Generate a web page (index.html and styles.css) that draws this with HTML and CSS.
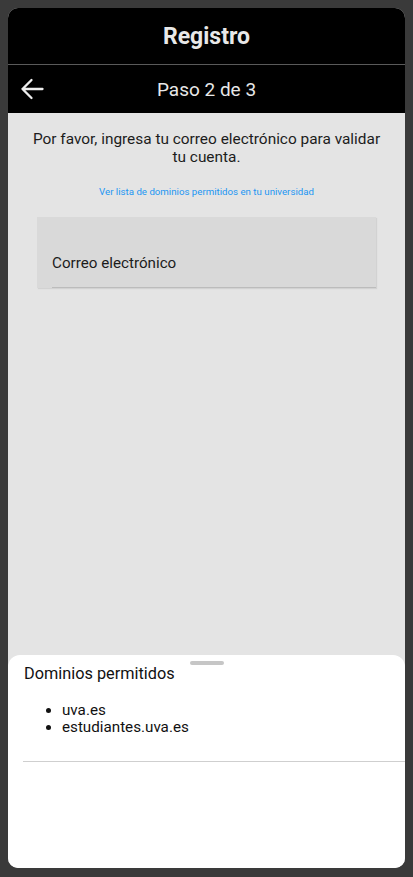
FILE: index.html
```html
<!DOCTYPE html>
<html lang="es">
<head>
  <meta charset="UTF-8">
  <meta name="viewport" content="width=device-width, initial-scale=1.0">
  <title>Registro</title>
  <link rel="stylesheet" href="styles.css">
</head>
<body>
  <div class="device">
    <!-- Cabecera -->
    <header class="title-bar">
      <h1>Registro</h1>
    </header>
    <nav class="step-bar">
      <button class="back-btn" aria-label="Volver">
        <svg width="24" height="22" viewBox="0 0 24 22">
          <path d="M2.5 11H22.5M11.5 2L2.5 11L11.5 20" fill="none" stroke="#eeeeee" stroke-width="2.3" stroke-linecap="round" stroke-linejoin="round"/>
        </svg>
      </button>
      <span class="step-label">Paso 2 de 3</span>
    </nav>

    <!-- Contenido -->
    <main class="content">
      <p class="intro">Por favor, ingresa tu correo electrónico para validar tu cuenta.</p>
      <a href="#" class="domain-link">Ver lista de dominios permitidos en tu universidad</a>
      <label class="field">
        <span class="field-label">Correo electrónico</span>
      </label>
    </main>

    <!-- Hoja inferior -->
    <section class="sheet">
      <div class="sheet-handle"></div>
      <h2 class="sheet-title">Dominios permitidos</h2>
      <ul class="domain-list">
        <li>uva.es</li>
        <li>estudiantes.uva.es</li>
      </ul>
      <hr class="sheet-divider">
    </section>
  </div>
</body>
</html>
```

FILE: styles.css
```css
body {
  margin: 0;
  padding: 8px;
  background-color: #3a3a3a;
  font-family: Roboto, "Noto Sans", sans-serif;
}
.device {
  width: 397px;
  height: 860px;
  border-radius: 10px;
  overflow: hidden;
  background-color: #e4e4e4;
  display: flex;
  flex-direction: column;
}
.title-bar {
  height: 56px;
  background-color: #000;
  border-bottom: 1px solid #5a5a5a;
  display: flex;
  align-items: center;
  justify-content: center;
}
.title-bar h1 {
  margin: 0;
  font-size: 23px;
  font-weight: bold;
  color: #e8e8e8;
}
.step-bar {
  height: 48px;
  background-color: #000;
  display: flex;
  align-items: center;
  justify-content: center;
  position: relative;
}
.back-btn {
  position: absolute;
  left: 12px;
  top: 13px;
  background: none;
  border: none;
  padding: 0;
  cursor: pointer;
  display: flex;
}
.step-label {
  font-size: 19px;
  color: #e8e8e8;
}
.content {
  flex: 1;
  padding: 17px 22px 0;
  display: flex;
  flex-direction: column;
  align-items: center;
}
.intro {
  margin: 0;
  font-size: 15.4px;
  line-height: 18px;
  color: #1c1c1c;
  text-align: center;
}
.domain-link {
  margin-top: 20px;
  font-size: 9.7px;
  line-height: 12px;
  color: #2196f3;
  text-decoration: none;
}
.field {
  margin-top: 19px;
  width: 339px;
  height: 71px;
  background-color: #d9d9d9;
  box-shadow: 1px 1px 1px #d2d2d2;
  padding-left: 15px;
  box-sizing: border-box;
  display: flex;
  align-items: flex-end;
}
.field-label {
  flex: 1;
  font-size: 15.2px;
  line-height: 18px;
  color: #1c1c1c;
  padding-bottom: 15px;
  border-bottom: 1px solid #bcbcbc;
}
.sheet {
  height: 213px;
  background-color: #fff;
  border-radius: 12px 12px 0 0;
  padding-left: 16px;
  display: flex;
  flex-direction: column;
}
.sheet-handle {
  align-self: center;
  margin: 6px 0 0 -16px;
  width: 34px;
  height: 4px;
  border-radius: 2px;
  background-color: #c6c6c6;
}
.sheet-title {
  margin: 0;
  font-size: 16.3px;
  font-weight: normal;
  line-height: 18px;
  color: #111;
}
.domain-list {
  margin: 19px 0 0;
  padding-left: 38px;
  font-size: 15.2px;
  line-height: 17px;
  color: #111;
}
.sheet-divider {
  margin: 25px 0 0 -1px;
  border: none;
  border-top: 1px solid #cfcfcf;
}
```
